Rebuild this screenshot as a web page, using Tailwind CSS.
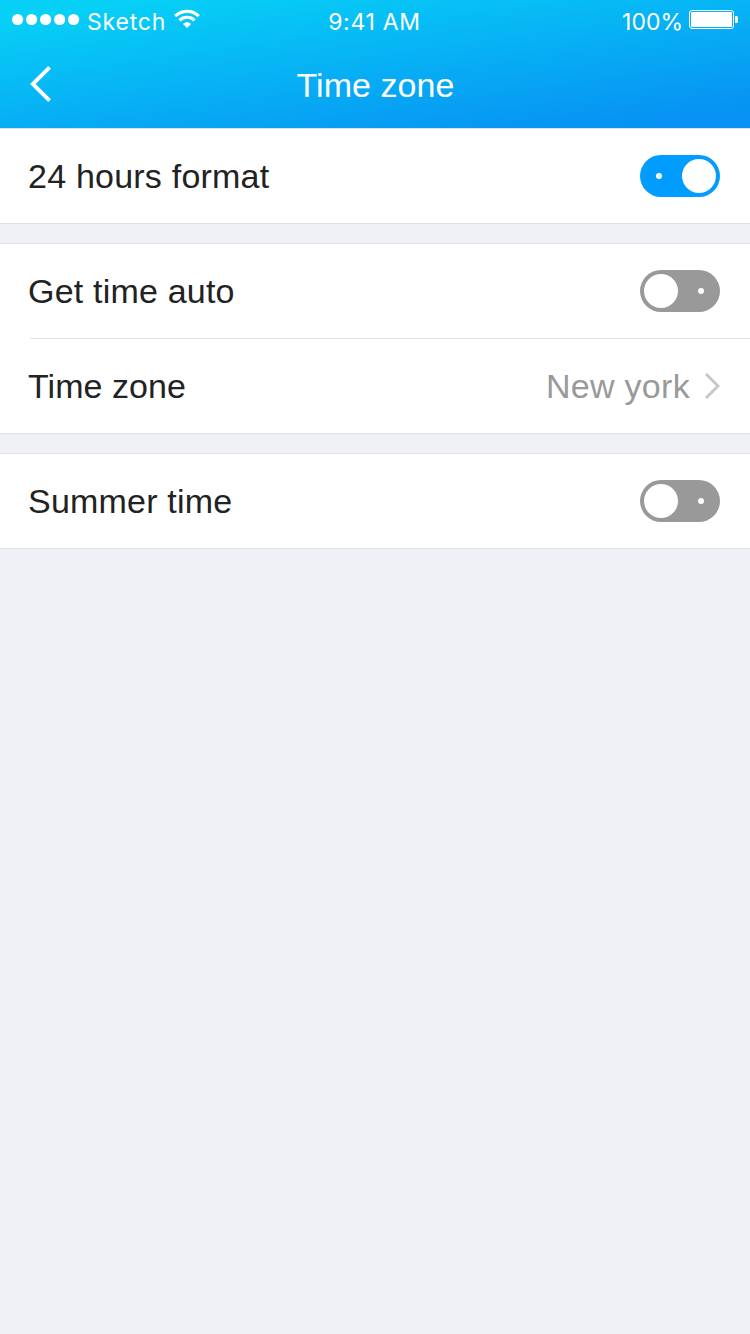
<!DOCTYPE html>
<html lang="en">
<head>
<meta charset="utf-8">
<title>Time zone</title>
<script src="https://cdn.jsdelivr.net/npm/@tailwindcss/browser@4"></script>
</head>
<body class="h-[1334px] w-[750px] overflow-hidden bg-[#eff1f6] font-['Liberation_Sans',Arial,sans-serif] text-[34px] leading-10 text-[#222]">
<header class="h-32 bg-[linear-gradient(172deg,#07d0f6_8%,#0793f3_90%)] text-white">
  <div class="grid h-10 grid-cols-3 items-start pr-3 pl-3 font-['Inter',sans-serif] text-[23px] leading-[45px] font-normal">
    <div class="flex">
      <svg class="mt-[13px] h-3 w-[68px]" viewBox="0 0 68 12" fill="currentColor"><circle cx="5.6" cy="6.5" r="5.6"/><circle cx="19.6" cy="6.5" r="5.6"/><circle cx="33.6" cy="6.5" r="5.6"/><circle cx="47.6" cy="6.5" r="5.6"/><circle cx="61.6" cy="6.5" r="5.6"/></svg>
      <span class="ml-[7px] w-[87px] tracking-[0.8px]">Sketch</span>
      <svg class="mt-[9px] h-[20px] w-[26px]" viewBox="0 0 26 20" fill="none" stroke="currentColor" stroke-width="3.1"><path d="M1.2 7.1C7.8.8 18.2.8 24.8 7.1"/><path d="M5.4 11.3c4.2-4 11-4 15.2 0"/><path d="M13 19l-4.1-4.1c2.3-2.1 5.9-2.1 8.2 0z" fill="currentColor" stroke="none"/></svg>
    </div>
    <span class="pr-px text-center tracking-[0.7px]">9:41 AM</span>
    <div class="flex justify-end">
      <span class="mr-[6px]">100%</span>
      <svg class="mt-[10px] h-[19px] w-[49px]" viewBox="0 0 49 19" fill="currentColor"><rect x=".5" y=".5" width="44" height="18" rx="2.5" fill="none" stroke="currentColor"/><rect x="2" y="2" width="41" height="15" rx="1"/><path d="M46 6h1.5q1.5 0 1.5 1.5v4q0 1.5-1.5 1.5H46z"/></svg>
    </div>
  </div>
  <div class="grid h-[88px] grid-cols-[100px_1fr_100px] items-center pb-[1px]">
    <svg class="ml-[30px] h-9 w-[22px]" viewBox="0 0 22 36" fill="none" stroke="white" stroke-width="3.9"><path d="M19.6 1.4 2.8 18l16.8 16.6"/></svg>
    <h1 class="pt-[2px] pl-px text-center tracking-[0.05px]">Time zone</h1>
  </div>
</header>
<main class="flex flex-col gap-[19px]">
  <section class="flex h-24 items-center justify-between border-y border-[#e2e3e5] bg-white pr-[30px] pl-7">
    <span class="tracking-[0.22px]">24 hours format</span>
    <div class="flex h-[42px] w-20 items-center justify-between rounded-full bg-[#009dff] pr-1 pl-4"><i class="size-1.5 rounded-full bg-white"></i><i class="size-[34px] rounded-full bg-white"></i></div>
  </section>
  <section class="border-y border-[#e2e3e5] bg-white">
    <div class="flex h-[94px] items-center justify-between pr-[30px] pl-7">
      <span class="tracking-[0.2px]">Get time auto</span>
      <div class="flex h-[42px] w-20 items-center justify-between rounded-full bg-[#999] pr-4 pl-1"><i class="size-[34px] rounded-full bg-white"></i><i class="size-1.5 rounded-full bg-white"></i></div>
    </div>
    <div class="ml-[30px] h-px bg-[#e2e3e5]"></div>
    <div class="flex h-[94px] items-center justify-between pr-[30px] pl-7">
      <span class="tracking-[0.05px]">Time zone</span>
      <div class="flex items-center gap-[15px] text-[#999]">
        <span class="tracking-[0.3px]">New york</span>
        <svg class="h-[26px] w-[15px]" viewBox="0 0 15 26" fill="none" stroke="#c8c8c8" stroke-width="3"><path d="M1 1l12 12L1 25"/></svg>
      </div>
    </div>
  </section>
  <section class="flex h-24 items-center justify-between border-y border-[#e2e3e5] bg-white pr-[30px] pl-7">
    <span class="tracking-[0.2px]">Summer time</span>
    <div class="flex h-[42px] w-20 items-center justify-between rounded-full bg-[#999] pr-4 pl-1"><i class="size-[34px] rounded-full bg-white"></i><i class="size-1.5 rounded-full bg-white"></i></div>
  </section>
</main>
</body>
</html>
